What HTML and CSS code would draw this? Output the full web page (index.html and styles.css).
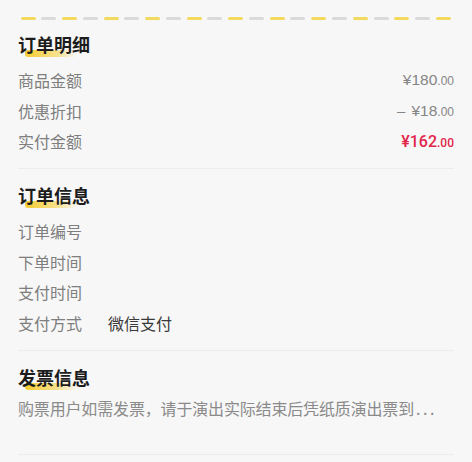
FILE: index.html
```html
<!DOCTYPE html>
<html lang="zh-CN">
<head>
<meta charset="utf-8">
<link rel="stylesheet" href="styles.css">
</head>
<body>
<div class="page">
  <div class="dashes">
    <span class="d y"></span><span class="d g"></span><span class="d y"></span><span class="d g"></span>
    <span class="d y"></span><span class="d g"></span><span class="d y"></span><span class="d g"></span>
    <span class="d y"></span><span class="d g"></span><span class="d y"></span><span class="d g"></span>
    <span class="d y"></span><span class="d g"></span><span class="d y"></span><span class="d g"></span>
    <span class="d y"></span><span class="d g"></span><span class="d y"></span><span class="d g"></span>
    <span class="d y"></span>
  </div>

  <section class="section first">
    <h2 class="title"><span class="mark"></span><span class="title-text">订单明细</span></h2>
    <div class="row">
      <span class="label">商品金额</span>
      <span class="amount"><span class="big">¥180</span><span class="small">.00</span></span>
    </div>
    <div class="row">
      <span class="label">优惠折扣</span>
      <span class="amount"><span class="minus">–</span><span class="big">¥18</span><span class="small">.00</span></span>
    </div>
    <div class="row">
      <span class="label">实付金额</span>
      <span class="amount red"><span class="big">¥162</span><span class="small">.00</span></span>
    </div>
  </section>

  <section class="section">
    <h2 class="title"><span class="mark"></span><span class="title-text">订单信息</span></h2>
    <div class="row left"><span class="label">订单编号</span></div>
    <div class="row left"><span class="label">下单时间</span></div>
    <div class="row left"><span class="label">支付时间</span></div>
    <div class="row left"><span class="label">支付方式</span><span class="value">微信支付</span></div>
  </section>

  <section class="section last">
    <h2 class="title"><span class="mark"></span><span class="title-text">发票信息</span></h2>
    <p class="note">购票用户如需发票，请于演出实际结束后凭纸质演出票到<span class="dots">...</span></p>
  </section>
</div>
</body>
</html>
```

FILE: styles.css
```css
* { box-sizing: border-box; }
html, body {
  margin: 0;
  padding: 0;
  background: #f7f7f7;
}
body {
  font-family: "Noto Sans CJK SC", "Noto Sans", sans-serif;
  color: #222;
}
.page {
  padding: 17px 18px 0 18px;
}
.dashes {
  display: flex;
  justify-content: space-between;
  height: 3px;
  margin: 0 3px 0 2.5px;
}
.d {
  width: 15px;
  height: 3px;
  border-radius: 2px;
}
.d.y { background: #f3da5e; }
.d.g { background: #dcd9da; }

.section {
  padding: 13px 0 12px;
  border-bottom: 1px solid #ececec;
}
.section.first {
  padding-top: 11px;
  padding-bottom: 11.5px;
}
.section.last {
  padding-bottom: 36px;
}
.title {
  position: relative;
  margin: 0 0 8px;
  height: 26px;
  line-height: 26px;
  font-size: 18px;
  font-weight: 700;
  color: #1c1c1c;
}
.title-text {
  position: relative;
}
.mark {
  position: absolute;
  left: 7px;
  top: 19px;
  width: 52px;
  height: 7px;
  border-radius: 3px;
  background: linear-gradient(to right, rgba(246, 204, 50, 1), rgba(246, 212, 80, 0.65) 60%, rgba(246, 220, 120, 0));
}
.row {
  display: flex;
  justify-content: space-between;
  align-items: center;
  height: 30.5px;
  font-size: 16px;
}
.row.left {
  justify-content: flex-start;
}
.label {
  color: #7e7e7e;
  width: 90px;
}
.value {
  color: #3a3a3a;
}
.amount {
  font-family: "Liberation Sans", Arial, sans-serif;
  color: #858585;
}
.amount .big { font-size: 15.5px; }
.amount .small { font-size: 12px; }
.amount .minus {
  font-size: 15px;
  margin-right: 6px;
}
.amount.red {
  color: #e1264a;
  font-family: Roboto, "Liberation Sans", sans-serif;
  font-weight: 500;
}
.amount.red .big { font-size: 16px; }
.note {
  margin: 0;
  height: 20px;
  line-height: 20px;
  font-size: 16px;
  letter-spacing: -0.16px;
  color: #8a8a8a;
  white-space: nowrap;
}
.dots {
  letter-spacing: 2.5px;
  margin-left: 2px;
}
```
